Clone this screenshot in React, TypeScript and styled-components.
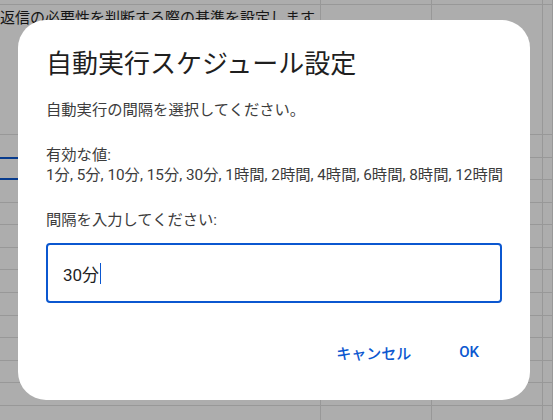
import React from 'react'
import styled, { createGlobalStyle } from 'styled-components'

const GlobalStyle = createGlobalStyle`
  html, body {
    margin: 0;
    padding: 0;
    width: 553px;
    height: 420px;
    overflow: hidden;
    background: #ffffff;
    font-family: Roboto, "Noto Sans CJK JP", sans-serif;
  }
`

// SHEET (behind the dialog)

const Sheet = styled.div`
  position: relative;
  width: 553px;
  height: 420px;
  overflow: hidden;
  background: #ffffff;
`

const Row = styled.div<{ h: number }>`
  display: grid;
  grid-template-columns: 321px 111px 111px 1fr;
  height: ${p => p.h}px;
`

const Cell = styled.div<{ selected?: boolean }>`
  box-sizing: border-box;
  border-right: 1px solid #e1e1e1;
  border-bottom: 1px solid #e1e1e1;
  font-size: 15px;
  line-height: 20px;
  color: #1f1f1f;
  white-space: nowrap;
  ${p => p.selected && `
    border-top: 2px solid #0b57d0;
    border-bottom: 2px solid #0b57d0;
    margin-top: -1px;
  `}
`

const CellText = styled.div`
  padding-top: 2px;
  font-family: "Noto Sans CJK JP", sans-serif;
`

const Scrim = styled.div`
  position: absolute;
  inset: 0;
  background: rgba(0, 0, 0, 0.32);
`

// DIALOG

const Dialog = styled.div`
  position: absolute;
  left: 18px;
  top: 20px;
  width: 512px;
  height: 380px;
  box-sizing: border-box;
  padding: 26px 28px 28px 28px;
  background: #ffffff;
  border-radius: 28px;
  display: flex;
  flex-direction: column;
`

const Title = styled.h2`
  margin: 0;
  font-family: "Noto Sans CJK JP", sans-serif;
  font-weight: 400;
  font-size: 26px;
  line-height: 32px;
  color: #1f1f1f;
`

const Text = styled.p<{ gap: number }>`
  margin: ${p => p.gap}px 0 0 0;
  font-size: 15.3px;
  line-height: 20px;
  color: #3c3c3c;
  white-space: nowrap;
`

const Field = styled.div`
  margin-top: 13px;
  height: 60px;
  box-sizing: border-box;
  border: 2px solid #0b57d0;
  border-radius: 4px;
  padding: 0 15px;
  display: flex;
  align-items: center;
  font-size: 17px;
  color: #1f1f1f;
`

const Caret = styled.span`
  display: inline-block;
  width: 1px;
  height: 21px;
  margin-left: 1px;
  background: #0b57d0;
`

const Actions = styled.div`
  margin-top: 29px;
  display: flex;
  justify-content: flex-end;
  margin-right: -1px;
`

const Button = styled.button`
  height: 40px;
  padding: 0 24px;
  border: none;
  background: transparent;
  font-family: Roboto, "Noto Sans CJK JP", sans-serif;
  font-size: 15px;
  font-weight: 500;
  color: #0b57d0;
  cursor: pointer;
`

const rows = [5, 130, 23, 22, 23, 22, 23, 22, 23, 23, 22, 23, 22, 23, 22]

const App = () => {
  return (
    <>
      <GlobalStyle />
      <Sheet>
        {rows.map((h, i) => (
          <Row key={i} h={h}>
            <Cell selected={i === 3}>
              {i === 1 && <CellText>返信の必要性を判断する際の基準を設定します。</CellText>}
            </Cell>
            <Cell />
            <Cell />
            <Cell />
          </Row>
        ))}
        <Scrim />
        <Dialog>
          <Title>自動実行スケジュール設定</Title>
          <Text gap={22}>自動実行の間隔を選択してください。</Text>
          <Text gap={25}>有効な値:</Text>
          <Text gap={0}>1分, 5分, 10分, 15分, 30分, 1時間, 2時間, 4時間, 6時間, 8時間, 12時間</Text>
          <Text gap={25}>間隔を入力してください:</Text>
          <Field>
            30分<Caret />
          </Field>
          <Actions>
            <Button>キャンセル</Button>
            <Button>OK</Button>
          </Actions>
        </Dialog>
      </Sheet>
    </>
  )
}

export default App
